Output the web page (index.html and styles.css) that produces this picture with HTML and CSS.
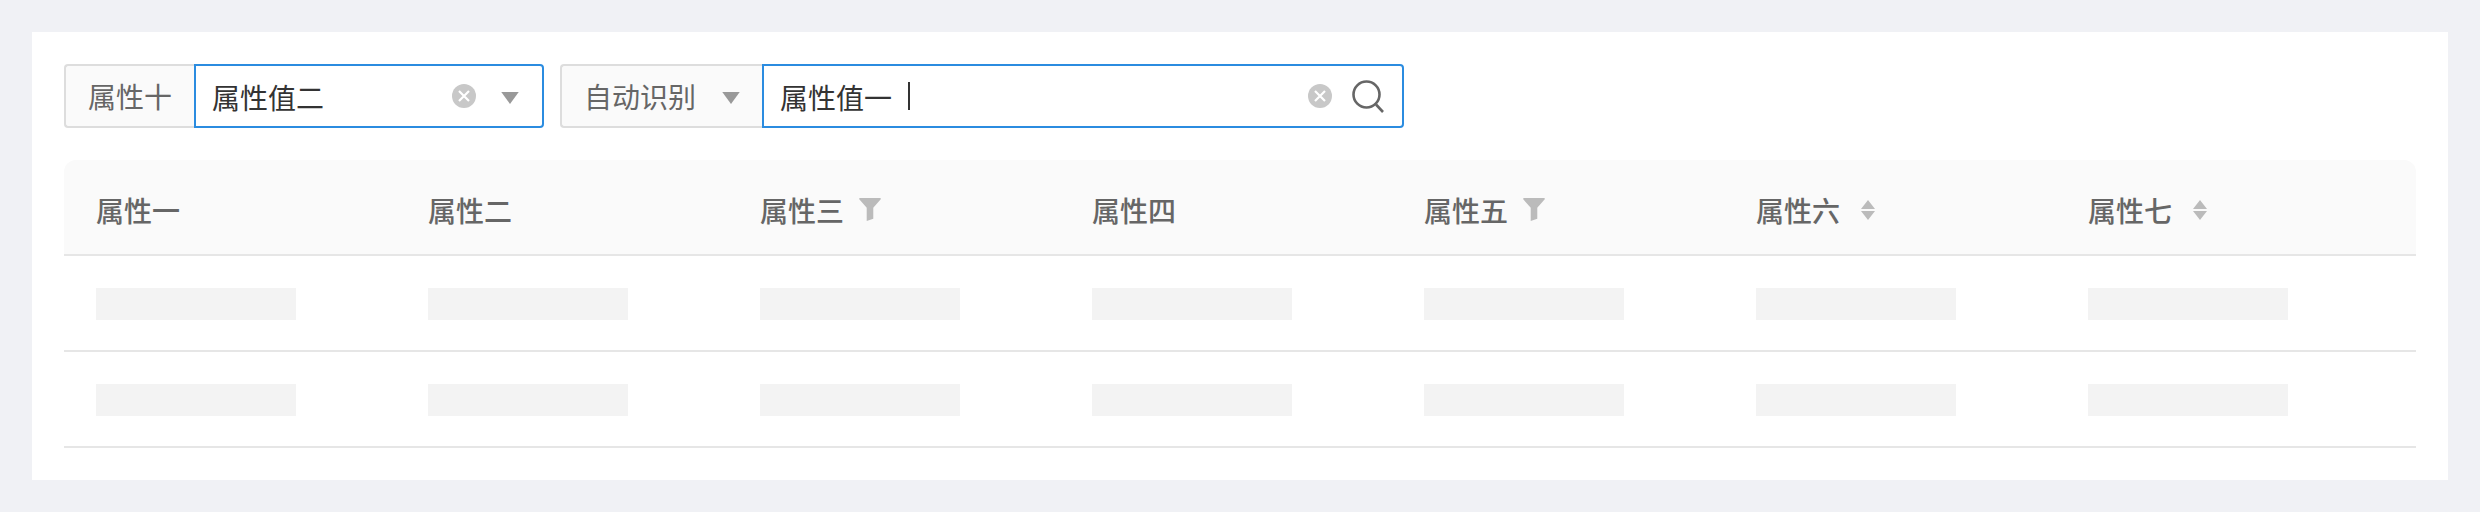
FILE: index.html
```html
<!DOCTYPE html>
<html lang="zh">
<head>
<meta charset="utf-8">
<title>属性表</title>
<link rel="stylesheet" href="styles.css">
</head>
<body>
<main class="card">
  <div class="filters">
    <div class="group group-select">
      <div class="addon addon-label">属性十</div>
      <div class="field">
        <span class="value">属性值二</span>
        <svg class="clear" viewBox="0 0 24 24"><circle cx="12" cy="12" r="12" fill="#c8c8c8"/><path d="M7 7l10 10M17 7L7 17" stroke="#fff" stroke-width="2.2" fill="none"/></svg>
        <svg class="caret caret-field" viewBox="0 0 16 11"><path d="M0 0h16l-8 11z" fill="#999"/></svg>
      </div>
    </div>
    <div class="group group-search">
      <div class="addon addon-auto">
        <span>自动识别</span>
        <svg class="caret" viewBox="0 0 16 11"><path d="M0 0h16l-8 11z" fill="#999"/></svg>
      </div>
      <div class="field">
        <span class="value">属性值一</span>
        <span class="cursor"></span>
        <svg class="clear clear-search" viewBox="0 0 24 24"><circle cx="12" cy="12" r="12" fill="#c8c8c8"/><path d="M7 7l10 10M17 7L7 17" stroke="#fff" stroke-width="2.2" fill="none"/></svg>
        <svg class="search" viewBox="0 0 32 33"><circle cx="14.5" cy="14.5" r="13" fill="none" stroke="#666" stroke-width="2.6"/><path d="M24 24.5l7 7.5" fill="none" stroke="#666" stroke-width="2.6"/></svg>
      </div>
    </div>
  </div>

  <div class="table">
    <div class="row head">
      <div class="cell">属性一</div>
      <div class="cell">属性二</div>
      <div class="cell">属性三<svg class="filter" viewBox="0 0 20 21"><path d="M0 1Q0 0 1 0h18q1 0 1 1l-7 8v10l-6 2V9z" fill="#bbb"/></svg></div>
      <div class="cell">属性四</div>
      <div class="cell">属性五<svg class="filter" viewBox="0 0 20 21"><path d="M0 1Q0 0 1 0h18q1 0 1 1l-7 8v10l-6 2V9z" fill="#bbb"/></svg></div>
      <div class="cell">属性六<svg class="sort" viewBox="0 0 14 20"><path d="M7 0l7 9H0zM0 11h14l-7 9z" fill="#bbb"/></svg></div>
      <div class="cell">属性七<svg class="sort" viewBox="0 0 14 20"><path d="M7 0l7 9H0zM0 11h14l-7 9z" fill="#bbb"/></svg></div>
    </div>
    <div class="row">
      <div class="cell body-cell"><span class="skeleton"></span></div>
      <div class="cell body-cell"><span class="skeleton"></span></div>
      <div class="cell body-cell"><span class="skeleton"></span></div>
      <div class="cell body-cell"><span class="skeleton"></span></div>
      <div class="cell body-cell"><span class="skeleton"></span></div>
      <div class="cell body-cell"><span class="skeleton"></span></div>
      <div class="cell body-cell"><span class="skeleton"></span></div>
    </div>
    <div class="row">
      <div class="cell body-cell"><span class="skeleton"></span></div>
      <div class="cell body-cell"><span class="skeleton"></span></div>
      <div class="cell body-cell"><span class="skeleton"></span></div>
      <div class="cell body-cell"><span class="skeleton"></span></div>
      <div class="cell body-cell"><span class="skeleton"></span></div>
      <div class="cell body-cell"><span class="skeleton"></span></div>
      <div class="cell body-cell"><span class="skeleton"></span></div>
    </div>
  </div>
</main>
</body>
</html>
```
FILE: styles.css
```css
* { box-sizing: border-box; }
html, body { height: 100%; }
body {
  margin: 0;
  padding: 32px;
  background: #f0f1f5;
  font-family: "Noto Sans CJK SC", "Noto Sans", sans-serif;
  font-size: 28px;
  overflow: hidden;
}
.card {
  height: 448px;
  padding: 32px;
  background: #fff;
}
.filters {
  display: flex;
  gap: 16px;
  height: 64px;
  margin-bottom: 32px;
}
.group { display: flex; height: 64px; }
.group-select { width: 480px; }
.group-search { width: 844px; }
.addon {
  display: flex;
  align-items: center;
  flex: none;
  padding-left: 22px;
  background: #fafafa;
  color: #666;
  border: 2px solid #ddd;
  border-right: 0;
  border-radius: 4px 0 0 4px;
}
.addon-label { width: 130px; }
.addon-auto { width: 202px; }
.addon-auto .caret { margin-left: 26px; }
.field {
  display: flex;
  align-items: center;
  flex: 1;
  min-width: 0;
  padding: 0 18px 0 16px;
  color: #333;
  border: 2px solid #2b8ce0;
  border-radius: 0 4px 4px 0;
}
.value { flex: none; margin-top: 1px; }
.cursor {
  flex: none;
  width: 2px;
  height: 28px;
  margin-left: 16px;
  background: #333;
}
.clear { flex: none; width: 24px; height: 24px; margin-left: auto; }
.clear-search { margin-right: 20px; }
.caret { flex: none; width: 18px; height: 12px; margin-top: 3px; }
.caret-field { margin-left: 25px; margin-right: 5px; }
.search { flex: none; width: 32px; height: 33px; }
.row {
  display: grid;
  grid-template-columns: repeat(6, 332px) 1fr;
  height: 96px;
  border-bottom: 2px solid #e6e6e6;
}
.head {
  background: #fafafa;
  border-radius: 12px 12px 0 0;
  color: #666;
  font-weight: 500;
}
.cell {
  display: flex;
  align-items: center;
  padding-left: 32px;
  padding-top: 5px;
}
.body-cell { padding-top: 2px; }
.filter { width: 22px; height: 23px; margin-left: 15px; }
.sort { width: 14px; height: 20px; margin-left: 21px; }
.skeleton {
  display: block;
  width: 200px;
  height: 32px;
  background: #f3f3f3;
}
```
